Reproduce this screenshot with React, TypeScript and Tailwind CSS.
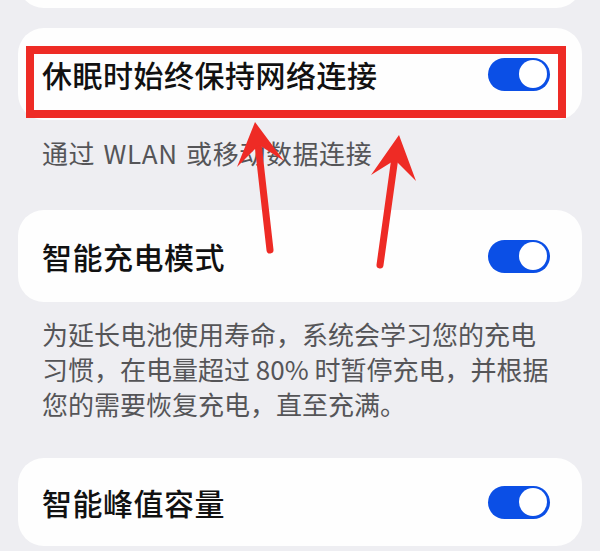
import React from 'react';

const font = { fontFamily: '"Noto Sans CJK SC", "Noto Sans", sans-serif' };

function Toggle() {
  return (
    <div className="w-[62px] h-[33px] rounded-full bg-[#0b4fe6] flex items-center justify-end pr-[3px] shrink-0">
      <div className="w-[28px] h-[28px] rounded-full bg-white" />
    </div>
  );
}

function SwitchRow({ title }: { title: string }) {
  return (
    <div className="h-[92px] rounded-[26px] bg-[#fefefe] flex items-center justify-between pl-[24px] pr-[32px]">
      <span className="text-[30px] font-medium text-[#111] tracking-[0.5px]">{title}</span>
      <Toggle />
    </div>
  );
}

function Hint({ children, className }: { children: React.ReactNode; className?: string }) {
  return (
    <p className={`px-[24px] text-[26px] leading-[35px] text-[#555558] ${className ?? ''}`}>{children}</p>
  );
}

// red markup drawn over the settings list
function Markup() {
  const red = '#ee2b25';
  return (
    <svg className="absolute inset-0 pointer-events-none" width="600" height="551" viewBox="0 0 600 551">
      <rect x="30" y="50" width="532" height="64" fill="none" stroke={red} strokeWidth="8" />
      <line x1="270" y1="250" x2="257" y2="135" stroke={red} strokeWidth="7" strokeLinecap="round" />
      <polygon points="255,122 284,161 259,145 237,167" fill={red} />
      <line x1="380" y1="265" x2="396" y2="150" stroke={red} strokeWidth="7" strokeLinecap="round" />
      <polygon points="399,135 416,181 395,160 371,175" fill={red} />
    </svg>
  );
}

export default function App() {
  return (
    <div className="relative w-[600px] h-[551px] overflow-hidden bg-[#eeeef2]" style={font}>
      <div className="px-[18px]">
        <div className="h-[60px] -mt-[52px] rounded-[26px] bg-[#fefefe]" />
        <div className="mt-[20px]">
          <SwitchRow title="休眠时始终保持网络连接" />
        </div>
        <Hint className="pt-[15px] pb-[40px] tracking-[0.6px] [word-spacing:2px]">通过 WLAN 或移动数据连接</Hint>
        <SwitchRow title="智能充电模式" />
        <Hint className="pt-[14px] pb-[37px]">
          为延长电池使用寿命，系统会学习您的充电习惯，在电量超过 80% 时暂停充电，并根据您的需要恢复充电，直至充满。
        </Hint>
        <div className="h-[88px] rounded-[26px] bg-[#fefefe] flex items-center justify-between pl-[24px] pr-[32px]">
          <span className="text-[30px] font-medium text-[#111] tracking-[0.5px]">智能峰值容量</span>
          <Toggle />
        </div>
      </div>
      <Markup />
    </div>
  );
}
